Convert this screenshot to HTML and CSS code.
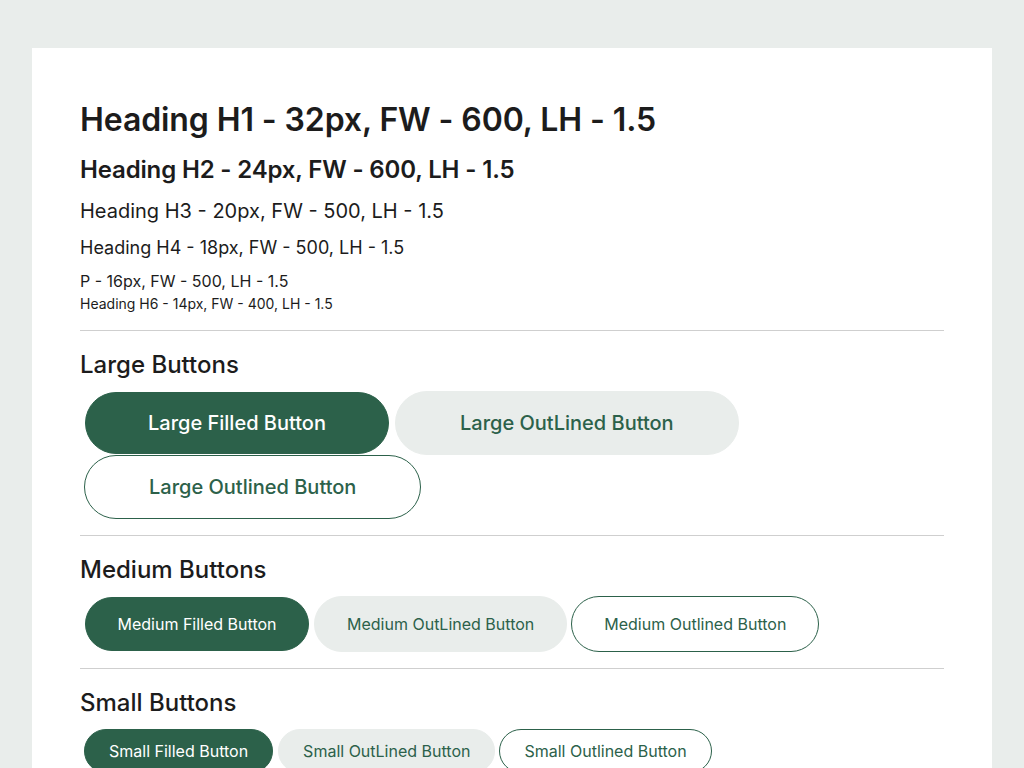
FILE: index.html
```html
<!DOCTYPE html>
<html>
<head>
<meta charset="utf-8">
<link rel="stylesheet" href="styles.css">
</head>
<body>
<main class="card">
  <section class="type">
    <h1 class="h1">Heading H1 - 32px, FW - 600, LH - 1.5</h1>
    <h2 class="h2">Heading H2 - 24px, FW - 600, LH - 1.5</h2>
    <h3 class="h3">Heading H3 - 20px, FW - 500, LH - 1.5</h3>
    <h4 class="h4">Heading H4 - 18px, FW - 500, LH - 1.5</h4>
    <p class="p">P - 16px, FW - 500, LH - 1.5</p>
    <h6 class="h6">Heading H6 - 14px, FW - 400, LH - 1.5</h6>
  </section>
  <hr class="divider">
  <section class="group">
    <h3 class="group-title">Large Buttons</h3>
    <div class="row row-lg">
      <button class="btn lg filled">Large Filled Button</button>
      <button class="btn lg tonal">Large OutLined Button</button>
      <button class="btn lg outlined">Large Outlined Button</button>
    </div>
  </section>
  <hr class="divider">
  <section class="group">
    <h3 class="group-title">Medium Buttons</h3>
    <div class="row row-md">
      <button class="btn md filled">Medium Filled Button</button>
      <button class="btn md tonal">Medium OutLined Button</button>
      <button class="btn md outlined">Medium Outlined Button</button>
    </div>
  </section>
  <hr class="divider">
  <section class="group">
    <h3 class="group-title">Small Buttons</h3>
    <div class="row row-sm">
      <button class="btn sm filled">Small Filled Button</button>
      <button class="btn sm tonal">Small OutLined Button</button>
      <button class="btn sm outlined">Small Outlined Button</button>
    </div>
  </section>
</main>
</body>
</html>
```
FILE: styles.css
```css
* { box-sizing: border-box; }
html, body { margin: 0; }
body {
  background: #e9edeb;
  padding: 48px 32px;
  font-family: Inter, "Noto Sans", sans-serif;
  color: #1c1c1c;
}
.card {
  background: #ffffff;
  padding: 48px;
  min-height: 800px;
}
.type h1, .type h2, .type h3, .type h4, .type p, .type h6 {
  margin: 0 0 8px;
  line-height: 1.5;
}
.h1 { font-size: 32px; font-weight: 600; letter-spacing: -0.1px; }
.h2 { font-size: 24px; font-weight: 600; letter-spacing: -0.15px; }
.h3 { font-size: 20px; font-weight: 400; }
.h4 { font-size: 18px; font-weight: 400; }
.type .p { font-size: 16px; font-weight: 400; margin: 0; }
.h6 { font-size: 14px; font-weight: 400; }
.divider {
  border: 0;
  border-top: 1px solid #cfcfcf;
  margin: 16px 0;
}
.group-title {
  margin: 0 0 8px;
  font-size: 24px;
  font-weight: 500;
  line-height: 1.5;
}
.row {
  display: flex;
  flex-wrap: wrap;
  align-items: center;
  padding-left: 4px;
  column-gap: 4px;
}
.btn {
  font-family: Inter, "Noto Sans", sans-serif;
  border-radius: 999px;
  border: 1px solid transparent;
  cursor: pointer;
  white-space: nowrap;
}
.filled { background: #2c614a; color: #ffffff; border-color: #2c614a; }
.tonal { background: #e9edeb; color: #2c614a; border-color: #e9edeb; }
.outlined { background: #ffffff; color: #2c614a; border-color: #2c614a; }
.lg { height: 64px; padding: 0 64px; font-size: 20px; font-weight: 500; }
.lg.filled { height: 62px; width: 304px; padding: 0; margin: 0 2px 0 1px; }
.md { height: 56px; padding: 0 32px; font-size: 16px; font-weight: 400; }
.md.filled { height: 54px; width: 224px; padding: 0; margin: 0 1px 0 1px; }
.sm { height: 44px; padding: 0 24px; font-size: 16px; font-weight: 400; }
.sm.filled { margin-right: 1px; }
```
